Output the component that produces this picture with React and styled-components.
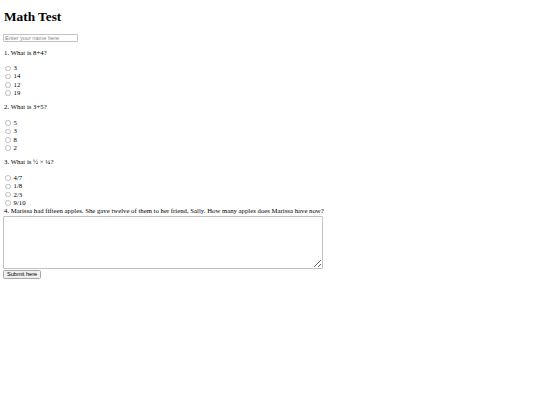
import React from "react";
import styled, { createGlobalStyle } from "styled-components";

const GlobalStyle = createGlobalStyle`
  html, body { margin: 0; padding: 0; background: #fff; }
  body {
    font-family: "Liberation Serif", "Times New Roman", serif;
    font-size: 6.75px;
    color: #000;
  }
`;

const Page = styled.form`
  display: flex;
  flex-direction: column;
  align-items: flex-start;
  padding: 0 3px;
`;

const Title = styled.h1`
  font-size: 13.3px;
  font-weight: bold;
  line-height: 15px;
  margin: 9px 0 10px 1px;
`;

const NameInput = styled.input`
  box-sizing: border-box;
  width: 75px;
  height: 8px;
  margin: 0 0 0.5px;
  padding: 0 1px;
  border: 1px solid #c2c2c2;
  border-radius: 1px;
  font-family: "Liberation Sans", Arial, sans-serif;
  font-size: 5.6px;
  outline: none;
  &::placeholder { color: #8a8a8a; }
`;

const Question = styled.p`
  margin: ${p => (p.$tight ? "0" : "6px 0 8px")};
  padding-left: 1px;
  line-height: 7.6px;
  white-space: nowrap;
`;

const Options = styled.div`
  display: flex;
  flex-direction: column;
`;

const Option = styled.label`
  display: flex;
  align-items: center;
  gap: 3px;
  height: 8.33px;
  line-height: 8.33px;
  padding-left: 2px;
`;

const Radio = styled.input.attrs({ type: "radio" })`
  appearance: none;
  box-sizing: border-box;
  width: 5.5px;
  height: 5.5px;
  margin: 0;
  border: 1px solid #bdbdbd;
  border-radius: 50%;
  background: #fff;
`;

const Answer = styled.textarea`
  box-sizing: border-box;
  width: 320px;
  height: 53px;
  margin: 1px 0 1.5px;
  border: 1px solid #c2c2c2;
  border-radius: 1px;
  resize: both;
  font-size: 6.6px;
`;

const Submit = styled.button`
  box-sizing: border-box;
  height: 9px;
  padding: 0 3px;
  border: 1px solid #a8a8a8;
  border-radius: 1.5px;
  background: #efefef;
  font-family: "Liberation Sans", Arial, sans-serif;
  font-size: 5.6px;
  line-height: 7px;
  color: #000;
`;

const questions = [
  { q: "1. What is 8+4?", name: "q1", opts: ["3", "14", "12", "19"] },
  { q: "2. What is 3+5?", name: "q2", opts: ["5", "3", "8", "2"] },
  { q: "3. What is ½ × ¼?", name: "q3", opts: ["4/7", "1/8", "2/3", "9/10"] },
];

export default function App() {
  return (
    <>
      <GlobalStyle />
      <Page onSubmit={e => e.preventDefault()}>
        <Title>Math Test</Title>
        <NameInput type="text" placeholder="Enter your name here" />
        {questions.map(item => (
          <React.Fragment key={item.name}>
            <Question>{item.q}</Question>
            <Options>
              {item.opts.map(o => (
                <Option key={o}>
                  <Radio name={item.name} value={o} />
                  <span>{o}</span>
                </Option>
              ))}
            </Options>
          </React.Fragment>
        ))}
        <Question $tight>
          4. Marissa had fifteen apples. She gave twelve of them to her friend, Sally. How many apples does Marissa have now?
        </Question>
        <Answer />
        <Submit type="submit">Submit here</Submit>
      </Page>
    </>
  );
}
